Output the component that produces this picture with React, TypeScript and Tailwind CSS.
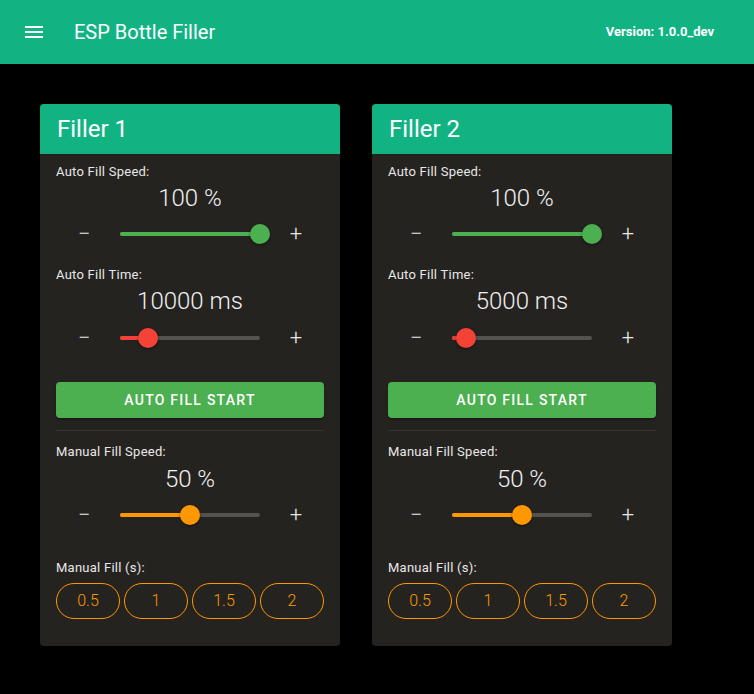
import React from "react";

const font = { fontFamily: "Roboto, 'Noto Sans', sans-serif" };

function Slider({ pct, color }: { pct: number; color: string }) {
  return (
    <div className="flex items-center h-9">
      <div className="w-14 flex justify-center text-[22px] font-light text-[#e6e6e6] leading-none">−</div>
      <div className="relative mx-2 w-[140px] h-1 rounded-full bg-[#555350]">
        <div className="absolute left-0 top-0 h-1 rounded-full" style={{ width: `${pct}%`, background: color }} />
        <div
          className="absolute top-1/2 w-5 h-5 rounded-full -translate-x-1/2 -translate-y-1/2 shadow-[0_1px_3px_rgba(0,0,0,0.5)]"
          style={{ left: `${pct}%`, background: color }}
        />
      </div>
      <div className="w-14 flex justify-center text-[22px] font-light text-[#e6e6e6] leading-none">+</div>
    </div>
  );
}

function Card({ title, time, timePct }: { title: string; time: string; timePct: number }) {
  return (
    <div className="w-[300px] h-[542px] rounded bg-[#252320] overflow-hidden">
      <div className="h-[50px] bg-[#12b383] flex items-center px-[17px] text-[24px] text-white">{title}</div>
      <div className="px-4 pt-[10px]">
        <div className="text-[13px] tracking-[0.25px] text-[#e8e8e8] h-[16px] leading-[16px]">Auto Fill Speed:</div>
        <div className="text-center text-[24px] font-light text-[#f0f0f0] h-[28px] leading-[28px] mt-[4px]">100 %</div>
        <div className="mt-[4px]"><Slider pct={100} color="#4caf50" /></div>
        <div className="text-[13px] tracking-[0.25px] text-[#e8e8e8] h-[16px] leading-[16px] mt-[15px]">Auto Fill Time:</div>
        <div className="text-center text-[24px] font-light text-[#f0f0f0] h-[28px] leading-[28px] mt-[4px]">{time}</div>
        <div className="mt-[5px]"><Slider pct={timePct} color="#f44336" /></div>
        <button className="mt-[26px] w-full h-9 rounded bg-[#4caf50] text-white text-[14px] font-medium tracking-[1.25px] shadow-[0_2px_2px_rgba(0,0,0,0.3)]">
          AUTO FILL START
        </button>
        <div className="mt-3 h-px bg-[#383632]" />
        <div className="text-[13px] tracking-[0.25px] text-[#e8e8e8] h-[16px] leading-[16px] mt-[13px]">Manual Fill Speed:</div>
        <div className="text-center text-[24px] font-light text-[#f0f0f0] h-[28px] leading-[28px] mt-[5px]">50 %</div>
        <div className="mt-[4px]"><Slider pct={50} color="#ff9800" /></div>
        <div className="text-[13px] tracking-[0.25px] text-[#e8e8e8] h-[16px] leading-[16px] mt-[27px]">Manual Fill (s):</div>
        <div className="mt-[7px] grid grid-cols-4 gap-1">
          {["0.5", "1", "1.5", "2"].map((v) => (
            <button key={v} className="h-9 rounded-full border border-[#ff9800] text-[#ff9800] text-[16px] font-light">
              {v}
            </button>
          ))}
        </div>
      </div>
    </div>
  );
}

export default function App() {
  return (
    <div className="w-[754px] h-[694px] bg-black" style={font}>
      <header className="h-16 bg-[#12b383] flex items-center">
        <div className="w-[74px] flex pl-[25px]">
          <svg width="18" height="12" viewBox="0 0 18 12">
            <rect x="0" y="0" width="18" height="2" fill="white" />
            <rect x="0" y="5" width="18" height="2" fill="white" />
            <rect x="0" y="10" width="18" height="2" fill="white" />
          </svg>
        </div>
        <div className="text-[20px] text-white">ESP Bottle Filler</div>
        <div className="ml-auto pr-10 text-[13px] font-bold text-white">Version: 1.0.0_dev</div>
      </header>
      <main className="flex gap-8 pl-10 pt-10">
        <Card title="Filler 1" time="10000 ms" timePct={20} />
        <Card title="Filler 2" time="5000 ms" timePct={10} />
      </main>
    </div>
  );
}
